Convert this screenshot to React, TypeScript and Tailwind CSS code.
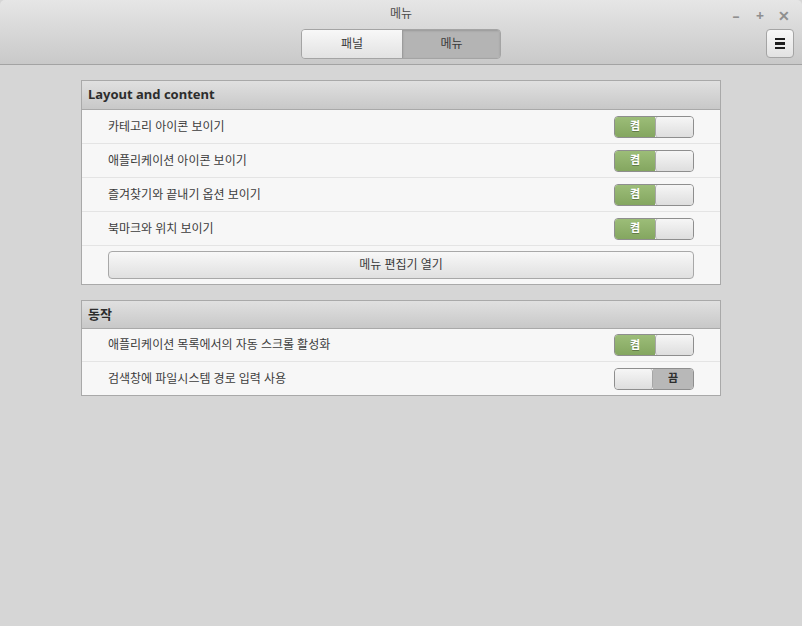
const font = { fontFamily: '"Noto Sans", "Noto Sans CJK KR", sans-serif' };

const Toggle = ({ on }: { on: boolean }) => (
  <div className="flex h-[22px] w-[80px] overflow-hidden rounded-[4px] border border-[#8e8e8e] text-[11px] font-bold">
    {on ? (
      <>
        <div className="flex w-[40px] items-center justify-center bg-gradient-to-b from-[#9cbd78] to-[#84a660] text-white [text-shadow:0_1px_0_rgba(0,0,0,0.3)]">
          켬
        </div>
        <div className="flex-1 rounded-[3px] border-l border-[#a6a6a6] bg-gradient-to-b from-[#f6f6f6] to-[#dedede]" />
      </>
    ) : (
      <>
        <div className="flex-1 rounded-[3px] border-r border-[#a6a6a6] bg-gradient-to-b from-[#f6f6f6] to-[#dedede]" />
        <div className="flex w-[40px] items-center justify-center bg-[#b8b8b8] text-[#2e2e2e]">
          끔
        </div>
      </>
    )}
  </div>
);

const Row = ({ label, on, h, last }: { label: string; on: boolean; h: string; last?: boolean }) => (
  <div
    className={`flex ${h} items-center justify-between pl-[26px] pr-[26px] ${
      last ? '' : 'border-b border-[#e4e4e4]'
    }`}
  >
    <span className="text-[12px] text-[#3c3c3c]">{label}</span>
    <Toggle on={on} />
  </div>
);

const SectionHeader = ({ title, h }: { title: string; h: string }) => (
  <div
    className={`flex ${h} items-center border-b border-[#a9a9a9] bg-gradient-to-b from-[#e0e0e0] to-[#c8c8c8] px-[6px] text-[13px] font-bold text-[#2d2d2d]`}
  >
    {title}
  </div>
);

export default function App() {
  return (
    <div className="flex h-[626px] w-[802px] flex-col bg-[#d6d6d6]" style={font}>
      {/* Header bar */}
      <div className="relative h-[65px] shrink-0 rounded-t-[5px] border-b border-[#a3a3a3] bg-gradient-to-b from-[#e6e6e6] to-[#c9c9c9]">
        <div className="pt-[5px] text-center text-[12px] text-[#4a4a4a]">메뉴</div>
        <div className="absolute right-[12px] top-[5px] flex gap-[12px] text-[14px] font-bold text-[#8f8f8f]">
          <span className="w-[12px] text-center">–</span>
          <span className="w-[12px] text-center">+</span>
          <span className="w-[12px] text-center">✕</span>
        </div>
        <div className="mt-[6px] flex justify-center">
          <div className="flex h-[30px] w-[200px] overflow-hidden rounded-[4px] border border-[#a4a4a4] text-[12px] text-[#3a3a3a]">
            <div className="flex w-[100px] items-center justify-center bg-gradient-to-b from-[#f8f8f8] to-[#e2e2e2]">
              패널
            </div>
            <div className="flex flex-1 items-center justify-center border-l border-[#9c9c9c] bg-[#b4b4b4] shadow-[inset_0_1px_2px_rgba(0,0,0,0.15)]">
              메뉴
            </div>
          </div>
        </div>
        <div className="absolute right-[8px] top-[29px] flex h-[29px] w-[28px] flex-col items-center justify-center gap-[2px] rounded-[4px] border border-[#a4a4a4] bg-gradient-to-b from-[#f8f8f8] to-[#e2e2e2]">
          <span className="h-[2.5px] w-[10px] bg-[#1e1e1e]" />
          <span className="h-[2.5px] w-[10px] bg-[#1e1e1e]" />
          <span className="h-[2.5px] w-[10px] bg-[#1e1e1e]" />
        </div>
      </div>

      {/* Content */}
      <div className="flex flex-col gap-[15px] px-[81px] pt-[15px]">
        <div className="border border-[#a9a9a9] bg-[#f7f7f7]">
          <SectionHeader title="Layout and content" h="h-[29px]" />
          <Row label="카테고리 아이콘 보이기" on h="h-[34px]" />
          <Row label="애플리케이션 아이콘 보이기" on h="h-[34px]" />
          <Row label="즐겨찾기와 끝내기 옵션 보이기" on h="h-[34px]" />
          <Row label="북마크와 위치 보이기" on h="h-[34px]" />
          <div className="flex h-[38px] items-center px-[26px]">
            <button className="h-[28px] w-full rounded-[4px] border border-[#a8a8a8] bg-gradient-to-b from-[#f8f8f8] to-[#e0e0e0] text-[12px] text-[#3a3a3a]">
              메뉴 편집기 열기
            </button>
          </div>
        </div>

        <div className="border border-[#a9a9a9] bg-[#f7f7f7]">
          <SectionHeader title="동작" h="h-[28px]" />
          <Row label="애플리케이션 목록에서의 자동 스크롤 활성화" on h="h-[33px]" />
          <Row label="검색창에 파일시스템 경로 입력 사용" on={false} h="h-[33px]" last />
        </div>
      </div>
    </div>
  );
}
